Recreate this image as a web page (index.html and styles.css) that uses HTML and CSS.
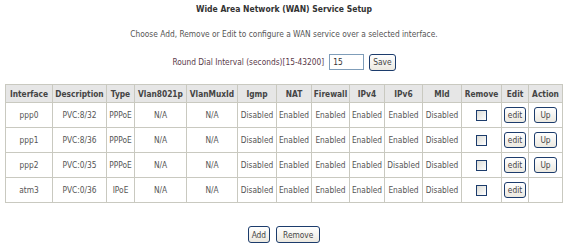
FILE: index.html
```html
<!DOCTYPE html>
<html lang="en">
<head>
    <meta charset="UTF-8">
    <title>Wide Area Network (WAN) Service Setup</title>
    <link rel="stylesheet" href="styles.css">
</head>
<body>
    <div class="title">Wide Area Network (WAN) Service Setup</div>
    <div class="intro">Choose Add, Remove or Edit to configure a WAN service over a selected interface.</div>
    <div class="dial">
        Round Dial Interval (seconds)[15-43200]
        <input type="text" class="dial-input" value="15">
        <button class="btn">Save</button>
    </div>

    <table class="wan-table">
        <colgroup>
            <col style="width:47px"><col style="width:54px"><col style="width:28px"><col style="width:52px">
            <col style="width:51px"><col style="width:39px"><col style="width:35px"><col style="width:38px">
            <col style="width:35px"><col style="width:38px"><col style="width:39px"><col style="width:40px">
            <col style="width:27px"><col style="width:34px">
        </colgroup>
        <tr>
            <th>Interface</th><th>Description</th><th>Type</th><th>Vlan8021p</th><th>VlanMuxId</th>
            <th>Igmp</th><th>NAT</th><th>Firewall</th><th>IPv4</th><th>IPv6</th><th>Mld</th>
            <th>Remove</th><th>Edit</th><th>Action</th>
        </tr>
        <tr>
            <td>ppp0</td><td>PVC:8/32</td><td>PPPoE</td><td>N/A</td><td>N/A</td>
            <td>Disabled</td><td>Enabled</td><td>Enabled</td><td>Enabled</td><td>Enabled</td><td>Disabled</td>
            <td><span class="check"></span></td><td><button class="btn">edit</button></td><td><button class="btn up">Up</button></td>
        </tr>
        <tr>
            <td>ppp1</td><td>PVC:8/36</td><td>PPPoE</td><td>N/A</td><td>N/A</td>
            <td>Disabled</td><td>Enabled</td><td>Enabled</td><td>Enabled</td><td>Enabled</td><td>Disabled</td>
            <td><span class="check"></span></td><td><button class="btn">edit</button></td><td><button class="btn up">Up</button></td>
        </tr>
        <tr>
            <td>ppp2</td><td>PVC:0/35</td><td>PPPoE</td><td>N/A</td><td>N/A</td>
            <td>Disabled</td><td>Enabled</td><td>Enabled</td><td>Enabled</td><td>Disabled</td><td>Disabled</td>
            <td><span class="check"></span></td><td><button class="btn">edit</button></td><td><button class="btn up">Up</button></td>
        </tr>
        <tr>
            <td>atm3</td><td>PVC:0/36</td><td>IPoE</td><td>N/A</td><td>N/A</td>
            <td>Disabled</td><td>Enabled</td><td>Enabled</td><td>Enabled</td><td>Enabled</td><td>Disabled</td>
            <td><span class="check"></span></td><td><button class="btn">edit</button></td><td></td>
        </tr>
    </table>

    <div class="actions">
        <button class="btn">Add</button>
        <button class="btn wide">Remove</button>
    </div>
</body>
</html>
```

FILE: styles.css
```css
body {
    margin: 0;
    background: #fff;
    color: #555;
    font-family: "DejaVu Sans Condensed", "DejaVu Sans", sans-serif;
    font-size: 8.3px;
    text-align: center;
}
.title {
    font-weight: bold;
    font-size: 8.5px;
    color: #333;
    padding-top: 4px;
    height: 22px;
}
.intro {
    height: 21px;
    padding-top: 3px;
}
.dial {
    display: flex;
    justify-content: center;
    align-items: center;
    gap: 5px;
    height: 20px;
    margin-top: 2px;
    color: #5a3a4a;
}
.dial-input {
    width: 27px;
    height: 12px;
    padding: 1px 3px;
    border: 1px solid #7f9db9;
    font: inherit;
    color: #333;
}
.btn {
    font: inherit;
    font-size: 8.3px;
    color: #444;
    background: linear-gradient(#ffffff, #ece9e0);
    border: 1px solid #1c3c6c;
    border-radius: 3px;
    padding: 1px 3px;
    height: 17px;
}
.wan-table {
    margin: 12px auto 0;
    border-collapse: collapse;
    table-layout: fixed;
    width: 557px;
}
.wan-table th, .wan-table td {
    border: 1px solid #c9c9c0;
    padding: 0;
    white-space: nowrap;
    overflow: hidden;
}
.wan-table th {
    background: #e6e6e6;
    color: #444;
    height: 17px;
}
.wan-table td {
    height: 24px;
}
.wan-table .btn {
    height: 16px;
}
.wan-table .up {
    padding: 1px 5px;
}
.check {
    display: inline-block;
    width: 9px;
    height: 9px;
    border: 1px solid #1c3c6c;
    background: linear-gradient(135deg, #dcdcd6, #fff);
    vertical-align: middle;
}
.actions {
    display: flex;
    justify-content: center;
    gap: 6px;
    margin-top: 23px;
}
.wide {
    padding: 1px 6px;
}
```
